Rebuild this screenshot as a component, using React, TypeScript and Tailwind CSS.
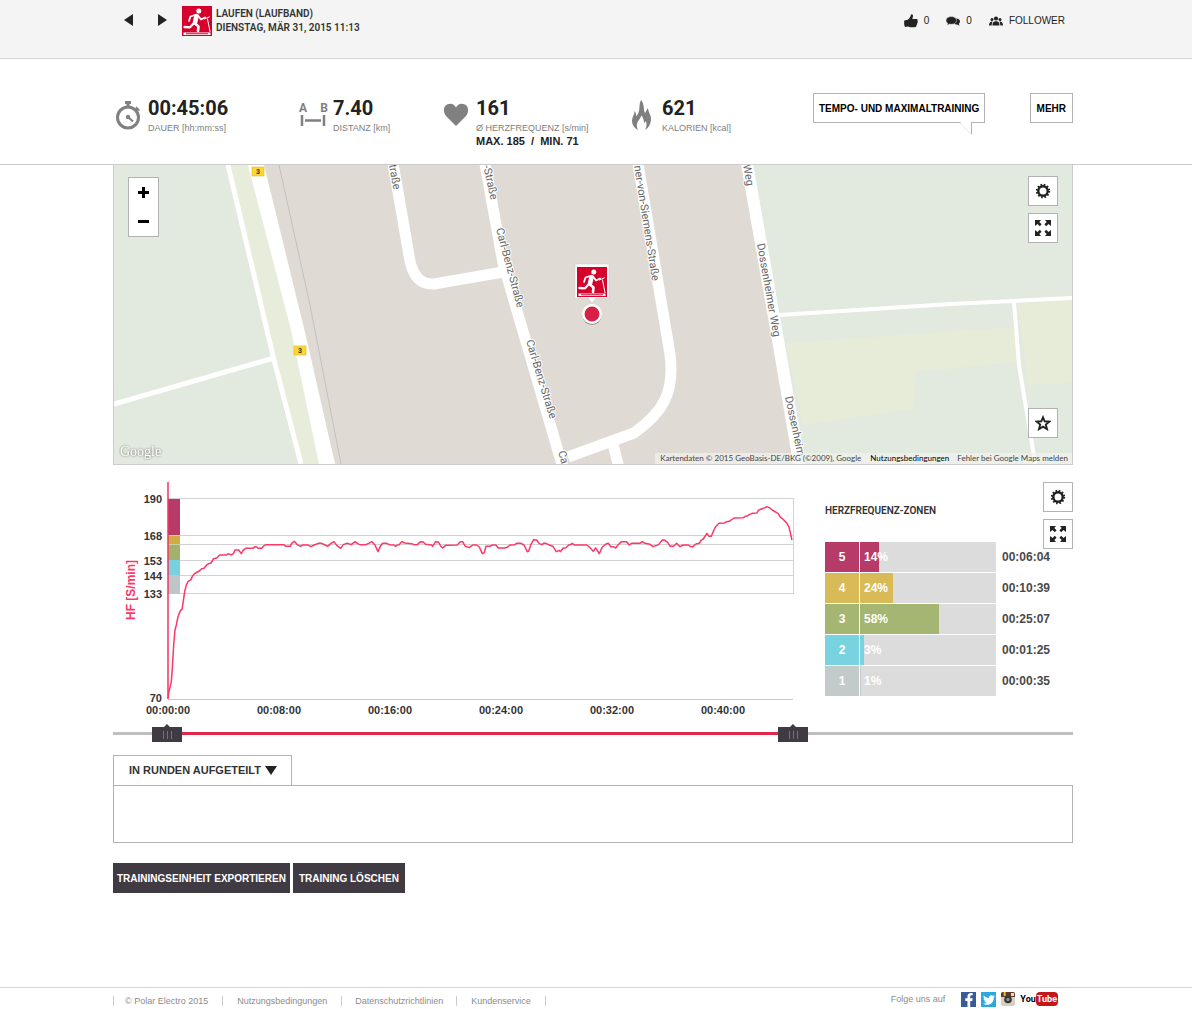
import React from 'react'
import { FaFacebookF, FaTwitter } from 'react-icons/fa'
import clsx from 'clsx'

const zones = [
  { zone: 5, percent: 14, time: '00:06:04', color: 'bg-[#b63b68]' },
  { zone: 4, percent: 24, time: '00:10:39', color: 'bg-[#d8ba57]' },
  { zone: 3, percent: 58, time: '00:25:07', color: 'bg-[#a5b572]' },
  { zone: 2, percent: 3, time: '00:01:25', color: 'bg-[#78d2e0]' },
  { zone: 1, percent: 1, time: '00:00:35', color: 'bg-[#c2caca]' },
]

// Heart rate curve, three units per chart pixel
const heartRate =
  '174,670 177,650 184,620 187,580 191,510 195,465 199,450 204,425 211,407 216,403 219,385 224,350 229,330 234,320 243,314 248,302 255,295 262,291 268,288 275,281 282,280 290,270 296,266 303,264 311,251 320,249 329,240 350,240 354,236 364,240 370,236 375,225 386,225 394,236 399,227 407,220 430,220 434,215 440,216 445,220 455,220 462,212 468,209 522,209 527,214 541,214 545,205 553,199 562,209 572,214 577,210 595,210 602,215 613,210 625,205 635,205 645,210 653,214 662,206 672,200 681,212 692,220 700,209 712,205 724,209 735,200 743,206 750,209 768,209 776,205 786,200 795,210 804,230 812,212 818,205 830,205 838,209 852,210 857,214 862,210 868,209 875,200 885,204 905,206 912,209 922,209 932,200 940,201 947,208 965,210 968,214 977,200 985,201 992,213 998,219 1007,211 1042,210 1051,200 1058,200 1066,214 1078,218 1088,210 1100,210 1108,216 1117,236 1123,233 1128,214 1140,214 1147,210 1158,210 1165,219 1185,219 1193,216 1202,210 1215,209 1220,205 1233,205 1242,210 1252,230 1256,229 1263,208 1271,194 1280,195 1288,206 1296,209 1301,205 1308,205 1320,211 1329,214 1339,230 1348,226 1351,230 1359,220 1368,218 1377,209 1382,209 1387,205 1393,210 1430,210 1440,218 1450,229 1457,219 1468,236 1477,216 1490,206 1495,205 1503,215 1510,215 1517,219 1526,208 1535,200 1550,200 1558,210 1565,205 1590,205 1597,200 1605,205 1620,208 1629,215 1646,209 1657,195 1665,196 1673,202 1681,214 1691,214 1700,205 1710,215 1720,210 1735,210 1742,215 1749,215 1758,207 1768,205 1773,196 1780,192 1791,175 1797,184 1804,184 1812,165 1817,155 1827,145 1844,144 1850,140 1858,139 1872,129 1900,128 1906,124 1912,123 1918,119 1927,115 1941,114 1945,106 1954,102 1966,98 1970,95 1978,98 1987,105 2004,115 2012,127 2021,134 2030,144 2037,156 2041,172 2046,195'

const TreadmillIcon = ({ className }: { className?: string }) => (
  <svg viewBox="0 0 30 30" className={className} aria-hidden="true">
    <rect width="30" height="30" fill="#d5002b" />
    <circle cx="16.800" cy="4.900" r="2.500" fill="#fff" />
    <g fill="none" stroke="#fff" strokeLinecap="round" strokeLinejoin="round">
      <path d="M14.500 10 13 16.500" strokeWidth="4.600" />
      <path d="M13 9 8.500 10.500 7 15" strokeWidth="1.800" />
      <path d="M16 9.500 19 13.500 23 11.500" strokeWidth="1.800" />
      <path d="M13 17.500 16.500 20.500 16 25" strokeWidth="2.600" />
      <path d="M12 17 8 21.300 2.500 21" strokeWidth="2.300" />
      <path d="M22.500 13 27.500 10.800M25.500 13 28 25.500" strokeWidth="1" />
    </g>
    <path d="M1.500 26.500h27v2.500h-27zM4 27.300v1h22v-1z" fill="#fff" fillRule="evenodd" />
  </svg>
)

const ThumbIcon = () => (
  <svg viewBox="0 0 14 14" className="size-3.5" aria-hidden="true">
    <path
      d="M.3 6.500 3.800 5.700C5.500 4.500 6.500 3 7 .8 7.300-.3 9 .2 9 1.800 9 3 8.600 4 8.200 5l4.300.1c1.300.2 1.500 1.500.9 2 .6.600.500 1.700-.3 2.100.400.800 0 1.600-.6 1.900.200 1-.3 1.700-1 1.900-2 .5-5 .5-7.500-.5l-3 .4C.2 11.500-.1 8.500.3 6.500z"
      fill="#222"
    />
  </svg>
)

const CommentsIcon = () => (
  <svg viewBox="0 0 14 14" className="size-3.5" aria-hidden="true">
    <path d="M10 4.500c2.300 0 4 1.300 4 3 0 1-.5 1.800-1.200 2.300l.7 1.900-2.500-1.200C8.500 10.700 7 9.700 7 8z" fill="#222" />
    <path
      d="M5.300 2.500c3 0 5.300 1.700 5.300 3.900s-2.300 3.900-5.300 3.900c-.6 0-1.200-.1-1.700-.2L1 11.600l.7-2.400C.6 8.500 0 7.500 0 6.400c0-2.200 2.300-3.900 5.300-3.900z"
      fill="#222"
      stroke="#f4f4f4"
      strokeWidth=".5"
    />
  </svg>
)

const FollowersIcon = () => (
  <svg viewBox="0 0 14 14" className="size-3.5" aria-hidden="true">
    <circle cx="7" cy="4.500" r="2.100" fill="#222" />
    <path d="M3.500 11.500c0-3 .8-3.300 2.700-4.200h1.600c1.900.9 2.700 1.200 2.700 4.200z" fill="#222" />
    <circle cx="3" cy="5.500" r="1.500" fill="#222" />
    <circle cx="11" cy="5.500" r="1.500" fill="#222" />
    <path d="M0 11.500c0-2.500 1-3.200 2.500-4l1.200.3C2.900 8.700 2.700 10 2.700 11.500zM14 11.500c0-2.500-1-3.200-2.500-4l-1.200.3c.8.900 1 2.200 1 3.700z" fill="#222" />
  </svg>
)

const StopwatchIcon = () => (
  <svg viewBox="0 0 26 30" className="h-[30px] w-[26px]" aria-hidden="true">
    <circle cx="13" cy="17.500" r="10.500" fill="none" stroke="#808080" strokeWidth="3" />
    <path d="M10 1h6v3h-1.500v3h-3V4H10z" fill="#808080" />
    <path d="m21 8 2.500 2.500M21 7l3.500 3.500" stroke="#808080" strokeWidth="1.600" />
    <circle cx="13" cy="17" r="2.200" fill="#808080" />
    <path d="m13 17 5 4.500" stroke="#808080" strokeWidth="2" />
  </svg>
)

const DistanceIcon = () => (
  <svg viewBox="0 0 30 26" className="h-[26px] w-[30px]" aria-hidden="true">
    <g fill="#808080" fontFamily="Roboto, sans-serif" fontWeight="700" fontSize="12" textAnchor="middle">
      <text x="5" y="10">A</text>
      <text x="26" y="10">B</text>
    </g>
    <path d="M4 13v11M26 13v11M7 18.500h16" stroke="#808080" strokeWidth="2.500" fill="none" />
  </svg>
)

const HeartIcon = () => (
  <svg viewBox="0 0 26 24" className="h-[24px] w-[26px]" aria-hidden="true">
    <path d="M13 23 3.500 13.500C-.5 9 .5 3.500 4 1.600 7.500-.2 11.500 1 13 4.500 14.500 1 18.500-.2 22 1.600c3.500 1.900 4.500 7.400.5 11.900z" fill="#808080" />
  </svg>
)

const FlameIcon = () => (
  <svg viewBox="0 0 20 30" className="h-[30px] w-5" aria-hidden="true">
    <path
      d="M9 0c4 5 2 9 4 13 1-1 1.500-3.500 3-5 0 4 3.500 7 3 12-.3 4-2.500 8-6 10 1.500-3 2-5 1-9-.7 1-1.300 1.500-2 2 0-3-1-5.500-2.500-7.500C8 19 5.500 21 5 24c-.4 2.500 0 4.500 1.200 6C2 28 0 24.500 0 20.500 0 17 2.500 15 2.500 11c1.300 1.500 1.800 3 1.500 5.500C9.500 11 6 5 9 0z"
      fill="#808080"
    />
  </svg>
)

const GearIcon = () => (
  <svg viewBox="0 0 16 16" className="size-4" aria-hidden="true">
    <circle cx="8" cy="8" r="4.700" fill="none" stroke="#222" strokeWidth="2.400" />
    <circle cx="8" cy="8" r="6" fill="none" stroke="#222" strokeWidth="2.400" strokeDasharray="1.571 1.571" />
  </svg>
)

const ExpandIcon = () => (
  <svg viewBox="0 0 16 16" className="size-4" aria-hidden="true">
    <path
      d="M0 0h6L4.300 2 6.600 4.300 4.800 6.200 2.500 4 0 6zM16 0v6l-2.500-2-2.300 2.200-1.800-1.900L11.700 2 10 0zM0 16v-6l2.500 2 2.300-2.200 1.800 1.900L4.300 14 6 16zM16 16h-6l1.700-2-2.300-2.300 1.800-1.900 2.300 2.200 2.500-2z"
      fill="#222"
    />
  </svg>
)

const StarIcon = () => (
  <svg viewBox="0 0 16 16" className="size-4" aria-hidden="true">
    <path d="m8 2.300 1.700 4 4.800.3-3.700 3 1.200 4.500L8 11.700l-4 2.400 1.200-4.500-3.700-3 4.800-.3z" fill="none" stroke="#222" strokeWidth="1.900" />
  </svg>
)

const InstagramIcon = () => (
  <svg viewBox="0 0 14 14" className="size-3.5" aria-hidden="true">
    <rect width="14" height="14" rx="2" fill="#d9cfc0" />
    <path d="M2 0h10a2 2 0 0 1 2 2v3H0V2a2 2 0 0 1 2-2z" fill="#5b3a29" />
    <path d="M2 0h1v4H2z" fill="#d33" />
    <path d="M3 0h1v4H3z" fill="#e8c33c" />
    <path d="M4 0h1v4H4z" fill="#5a9" />
    <rect x="10" y="1" width="3" height="3" fill="#ddd" />
    <circle cx="7" cy="7.500" r="3.800" fill="#3b3634" />
    <circle cx="7" cy="7.500" r="1.700" fill="#8d8f96" />
  </svg>
)

const IconButton = ({ label, children }: { label: string; children: React.ReactNode }) => (
  <button type="button" aria-label={label} className="flex size-[30px] items-center justify-center border border-[#b2b2b2] bg-white">
    {children}
  </button>
)

type StatProps = { icon: React.ReactNode; value: string; label: string; extra?: string }

const Stat = ({ icon, value, label, extra }: StatProps) => (
  <div className="flex">
    <div className="mr-[5px] flex h-[38px] w-[30px] shrink-0 items-center justify-center">{icon}</div>
    <div>
      <p className="font-['Roboto',sans-serif] text-xl leading-6 font-bold text-[#222]">{value}</p>
      <p className="pt-px text-[9px] leading-[14px] whitespace-nowrap text-[#808080]">{label}</p>
      {extra && <p className="text-[11px] leading-3 font-bold whitespace-pre text-[#222]">{extra}</p>}
    </div>
  </div>
)

const Header = () => (
  <header className="h-[59px] border-b border-[#d5d5d5] bg-[#f4f4f4]">
    <div className="mx-auto flex max-w-[966px] items-start justify-between pt-1.5 pr-[14px] pl-[10px]">
      <div className="flex">
        <button type="button" aria-label="Zurück" className="mt-2 mr-6 h-3 w-2.5">
          <svg viewBox="0 0 10 12" className="h-3 w-2.5">
            <path d="M10 0v12L1 6z" fill="#222" />
          </svg>
        </button>
        <button type="button" aria-label="Weiter" className="mt-2 mr-[15px] h-3 w-2.5">
          <svg viewBox="0 0 10 12" className="h-3 w-2.5">
            <path d="M1 0v12l9-6z" fill="#222" />
          </svg>
        </button>
        <TreadmillIcon className="size-[30px]" />
        <h1 className="ml-1 pt-px font-['Roboto',sans-serif] text-[10px] leading-[14px] font-semibold text-[#333]">
          LAUFEN (LAUFBAND)
          <br />
          DIENSTAG, MÄR 31, 2015 11:13
        </h1>
      </div>
      <div className="flex gap-[17px] pt-2 text-[10px] leading-3 text-[#222]">
        <button type="button" aria-label="Gefällt mir" className="flex items-center gap-1.5">
          <ThumbIcon />0
        </button>
        <button type="button" aria-label="Kommentare" className="flex items-center gap-1.5">
          <CommentsIcon />0
        </button>
        <button type="button" className="flex items-center gap-1.5">
          <FollowersIcon />
          FOLLOWER
        </button>
      </div>
    </div>
  </header>
)

const Summary = () => (
  <section className="h-[106px] border-b border-[#ccc]">
    <div className="mx-auto grid max-w-[966px] grid-cols-[185px_143px_186px_186px_1fr] pt-[37px] pr-[6px]">
      <Stat icon={<StopwatchIcon />} value="00:45:06" label="DAUER [hh:mm:ss]" />
      <Stat icon={<DistanceIcon />} value="7.40" label="DISTANZ [km]" />
      <Stat icon={<HeartIcon />} value="161" label="Ø HERZFREQUENZ [s/min]" extra="MAX. 185  /  MIN. 71" />
      <Stat icon={<FlameIcon />} value="621" label="KALORIEN [kcal]" />
      <div className="-mt-[3px] flex items-start justify-between text-[10px] font-bold whitespace-nowrap text-black">
        <button type="button" className="relative h-[30px] border border-[#b2b2b2] bg-white px-[5px]">
          TEMPO- UND MAXIMALTRAINING
          <svg viewBox="0 0 12 12" className="absolute top-7 right-3 size-3" aria-hidden="true">
            <path d="M0 0h11v12z" fill="#fff" />
            <path d="M11.500 0v12" stroke="#b2b2b2" />
            <path d="m0 1 11 11" stroke="#e8e8e8" />
          </svg>
        </button>
        <button type="button" className="h-[30px] border border-[#b2b2b2] bg-white px-1.5">
          MEHR
        </button>
      </div>
    </div>
  </section>
)

const RoadSign = ({ x, y }: { x: number; y: number }) => (
  <g transform={`translate(${x} ${y})`}>
    <rect width="12" height="9" fill="#fbd730" stroke="#d9b62c" strokeWidth=".6" />
    <text x="6" y="7" textAnchor="middle" fontSize="7" fontWeight="700" fill="#333" stroke="none">
      3
    </text>
  </g>
)

const streetNames = [
  { x: 275, y: 0, angle: 80, name: 'traße' },
  { x: 369, y: 1, angle: 77, name: '-Straße' },
  { x: 382, y: 64, angle: 75, name: 'Carl-Benz-Straße' },
  { x: 412, y: 176, angle: 73, name: 'Carl-Benz-Straße' },
  { x: 444, y: 287, angle: 73, name: 'Ca' },
  { x: 520, y: 1, angle: 81, name: 'ner-von-Siemens-Straße' },
  { x: 629, y: 0, angle: 80, name: 'Weg' },
  { x: 643, y: 79, angle: 80, name: 'Dossenheimer Weg' },
  { x: 671, y: 232, angle: 78, name: 'Dossenheim' },
]

const RouteMap = () => (
  <section aria-label="Karte" className="relative h-[300px] overflow-hidden border border-t-0 border-[#ccc]">
    <svg viewBox="0 0 958 299" preserveAspectRatio="xMidYMid slice" className="h-full w-full" fontFamily="Roboto, sans-serif">
      <rect width="958" height="299" fill="#e2e9de" />
      <path d="M116 0h20l43 165 28 134h-19l-26-104z" fill="#e7edda" />
      <path d="M672 178 902 162l2 35-102 10-3 37-110 16zM904 138l54-3v83l-44 2z" fill="#e7ecd9" />
      <path d="M150 0h484l31 175 22 124H221L192 170z" fill="#dfdad4" />
      <path d="M165 0 196 140l31 159" fill="none" stroke="#c3c0bd" />
      <path d="M134 0h16l42 172 29 127h-16l-28-134z" fill="#fff" />
      <g fill="none" stroke="#fff">
        <path d="m114 0 46 195 27 104M0 239l160-46" strokeWidth="5" />
        <path d="m279-2 17 98q5 24 24 23l75-13M371-1l18 99 60 205M524-1l32 190c5 40-8 59-36 79l-66 24M498 275l7 28" strokeWidth="11" />
        <path d="m633-1 31 176 22 128" strokeWidth="12" />
        <path d="m665 150 172-11 121-6M900 137l5 63 17 103" strokeWidth="4" />
      </g>
      <RoadSign x={138} y={2} />
      <RoadSign x={180} y={181} />
      <g fontSize="11" fill="#666" stroke="#fff" strokeWidth="2" paintOrder="stroke">
        {streetNames.map(({ x, y, angle, name }) => (
          <text key={`${name}-${y}`} transform={`translate(${x} ${y}) rotate(${angle})`}>
            {name}
          </text>
        ))}
      </g>
      <g>
        <path d="M461 99h34v34h-13l-4 5-4-5h-13z" fill="#fff" stroke="#ccc" strokeWidth=".6" />
        <svg x="463" y="102" width="30" height="30">
          <TreadmillIcon />
        </svg>
        <circle cx="478" cy="150.500" r="9.500" fill="#77706b" opacity=".7" />
        <circle cx="478" cy="149" r="8.700" fill="#d81f45" stroke="#fff" strokeWidth="2.500" />
      </g>
    </svg>
    <div className="absolute top-3 left-[14px] flex w-[31px] flex-col border border-[#b2b2b2] bg-white">
      <button type="button" aria-label="Vergrößern" className="flex h-[29px] items-center justify-center">
        <svg viewBox="0 0 11 11" className="size-[11px]">
          <path d="M4 0h3v4h4v3H7v4H4V7H0V4h4z" />
        </svg>
      </button>
      <button type="button" aria-label="Verkleinern" className="flex h-[29px] items-center justify-center">
        <svg viewBox="0 0 11 11" className="size-[11px]">
          <path d="M0 4h11v3H0z" />
        </svg>
      </button>
    </div>
    <div className="absolute top-[11px] right-[14px] flex flex-col gap-[7px]">
      <IconButton label="Karteneinstellungen">
        <GearIcon />
      </IconButton>
      <IconButton label="Karte maximieren">
        <ExpandIcon />
      </IconButton>
    </div>
    <div className="absolute right-[14px] bottom-[26px]">
      <IconButton label="Favorit">
        <StarIcon />
      </IconButton>
    </div>
    <span className="absolute bottom-0.5 left-[6px] font-['Liberation_Serif',serif] text-sm text-white drop-shadow-[0_0_1px_#666]">Google</span>
    <div className="absolute right-0 bottom-0 flex bg-[#f2f2f0]/70 font-['Lato',sans-serif] text-[8px] leading-[11px] whitespace-nowrap text-[#444]">
      <span className="px-[5px]">Kartendaten © 2015 GeoBasis-DE/BKG (©2009), Google</span>
      <a href="#nutzung" className="px-[4px] text-black">
        Nutzungsbedingungen
      </a>
      <a href="#fehler" className="px-[4px]">
        Fehler bei Google Maps melden
      </a>
    </div>
  </section>
)

const HeartRateChart = () => (
  <svg viewBox="0 0 712 236" className="block w-full" fontFamily="'Liberation Sans', Arial, sans-serif" role="img" aria-label="Herzfrequenz">
    <g stroke="#d2d2d2" shapeRendering="crispEdges">
      <path d="M55 16.500h625.500M55 53.500h625M55 62.500h625M55 78.500h625M55 93.500h625M55 111.500h625.500V16" fill="none" />
      <path d="M55 217.500h625" stroke="#c8c8d4" />
    </g>
    <g shapeRendering="crispEdges">
      <rect x="55" y="17" width="12" height="36" fill="#b63b68" />
      <rect x="55" y="53" width="12" height="9" fill="#d0ac45" />
      <rect x="55" y="62" width="12" height="16" fill="#a2b26c" />
      <rect x="55" y="78" width="12" height="15" fill="#76d2df" />
      <rect x="55" y="93" width="12" height="19" fill="#bfc6c7" />
      <path d="M55 53.500h12M55 62.500h12" stroke="#fff" opacity=".4" />
    </g>
    <path d="M55 0v217" stroke="#f9305f" strokeWidth="1.500" />
    <g transform="translate(-3 -7) scale(.3333)">
      <polyline points={heartRate} fill="none" stroke="#fb3868" strokeWidth="4.500" strokeLinejoin="round" />
    </g>
    <g fontSize="11" fontWeight="700" fill="#333">
      <g textAnchor="end">
        <text x="49" y="21">190</text>
        <text x="49" y="58">168</text>
        <text x="49" y="83">153</text>
        <text x="49" y="98">144</text>
        <text x="49" y="116">133</text>
        <text x="49" y="220">70</text>
      </g>
      <g textAnchor="middle">
        <text x="55" y="232">00:00:00</text>
        <text x="166" y="232">00:08:00</text>
        <text x="277" y="232">00:16:00</text>
        <text x="388" y="232">00:24:00</text>
        <text x="499" y="232">00:32:00</text>
        <text x="610" y="232">00:40:00</text>
      </g>
      <text transform="translate(22 108) rotate(-90)" textAnchor="middle" fontSize="12" fill="#fb3868">
        HF [S/min]
      </text>
    </g>
  </svg>
)

const Zones = () => (
  <aside className="relative">
    <h2 className="pt-[21px] font-['Roboto',sans-serif] text-[10px] leading-4 font-semibold text-[#333]">HERZFREQUENZ-ZONEN</h2>
    <table className="mt-[23px] text-xs font-bold">
      <tbody>
        {zones.map(({ zone, percent, time, color }) => (
          <tr key={zone}>
            <th className="p-0 pb-px text-white">
              <div className={clsx(color, 'mr-px flex h-[30px] w-[34px] items-center justify-center')}>{zone}</div>
            </th>
            <td className="w-[136px] p-0 pb-px text-white">
              <div className="relative flex h-[30px] items-center bg-[#dcdcdc]">
                <div className={clsx(color, 'h-full')} style={{ width: `${percent}%` }} />
                <span className="absolute left-1">{percent}%</span>
              </div>
            </td>
            <td className="p-0 pb-0.5 pl-1.5 text-[#4a4a4a]">{time}</td>
          </tr>
        ))}
      </tbody>
    </table>
    <div className="absolute top-0 right-0 flex flex-col gap-[7px]">
      <IconButton label="Diagrammeinstellungen">
        <GearIcon />
      </IconButton>
      <IconButton label="Diagramm maximieren">
        <ExpandIcon />
      </IconButton>
    </div>
  </aside>
)

const thumb =
  'pointer-events-none absolute inset-0 m-0 h-[18px] w-full appearance-none bg-transparent [&::-webkit-slider-thumb]:pointer-events-auto [&::-webkit-slider-thumb]:h-[18px] [&::-webkit-slider-thumb]:w-[30px] [&::-webkit-slider-thumb]:appearance-none [&::-webkit-slider-thumb]:rounded-none [&::-webkit-slider-thumb]:bg-[#403a43] [&::-webkit-slider-thumb]:bg-[linear-gradient(90deg,transparent_11px,#77727a_11px,#77727a_12px,transparent_12px,transparent_15px,#77727a_15px,#77727a_16px,transparent_16px,transparent_19px,#77727a_19px,#77727a_20px,transparent_20px)] [&::-webkit-slider-thumb]:bg-[length:30px_8px] [&::-webkit-slider-thumb]:bg-[position:0_7px] [&::-webkit-slider-thumb]:bg-no-repeat [&::-webkit-slider-thumb]:[clip-path:polygon(0_3px,12px_3px,15px_0,18px_3px,100%_3px,100%_100%,0_100%)]'

const RangeSlider = () => {
  const max = 930
  const [start, setStart] = React.useState(39)
  const [end, setEnd] = React.useState(665)

  return (
    <div className="relative mt-1.5 flex h-[18px] items-center">
      <div className="h-[3px] w-full bg-[#bfbfbf]">
        <div className="h-full bg-[#e0294a]" style={{ marginLeft: `${(start / max) * 100}%`, width: `${((end - start) / max) * 100}%` }} />
      </div>
      <input type="range" aria-label="Startzeit" min={0} max={max} value={start} onChange={(e) => setStart(Math.min(+e.target.value, end))} className={thumb} />
      <input type="range" aria-label="Endzeit" min={0} max={max} value={end} onChange={(e) => setEnd(Math.max(+e.target.value, start))} className={thumb} />
    </div>
  )
}

const Laps = () => (
  <section className="mt-[13px]">
    <button type="button" className="flex h-[30px] items-center gap-1 border border-b-0 border-[#b2b2b2] bg-white pr-[14px] pl-[15px] text-[11px] font-bold text-[#333]">
      IN RUNDEN AUFGETEILT
      <svg viewBox="0 0 12 9" className="h-[9px] w-3" aria-hidden="true">
        <path d="M0 0h12L6 9z" fill="#222" />
      </svg>
    </button>
    <div className="h-[58px] border border-[#b2b2b2]" />
    <div className="mt-5 flex gap-[3px] text-[10px] font-bold text-white">
      <button type="button" className="h-[30px] bg-[#403a43] px-1">
        TRAININGSEINHEIT EXPORTIEREN
      </button>
      <button type="button" className="h-[30px] bg-[#403a43] px-1.5">
        TRAINING LÖSCHEN
      </button>
    </div>
  </section>
)

const Footer = () => (
  <footer className="mt-auto border-t border-[#d5d5d5]">
    <div className="mx-auto flex h-[21px] max-w-[966px] justify-between pt-1 pr-[21px] text-[9px] text-[#8c8c8c]">
      <ul className="mt-1 flex h-[10px] divide-x divide-[#ccc] border-x border-[#ccc] leading-[10px]">
        <li className="pr-[14px] pl-[11px]">© Polar Electro 2015</li>
        <li>
          <a href="#nutzungsbedingungen" className="px-[14px]">
            Nutzungsbedingungen
          </a>
        </li>
        <li>
          <a href="#datenschutz" className="px-[13px]">
            Datenschutzrichtlinien
          </a>
        </li>
        <li>
          <a href="#kundenservice" className="px-[14px]">
            Kundenservice
          </a>
        </li>
      </ul>
      <div className="flex items-start leading-[14px]">
        <span className="mr-4">Folge uns auf</span>
        <a href="#facebook" aria-label="Facebook" className="mr-[5px] flex size-[15px] items-end justify-end bg-[#3b5998] text-white">
          <FaFacebookF className="size-3.5" />
        </a>
        <a href="#twitter" aria-label="Twitter" className="mr-[5px] flex size-[15px] items-center justify-center bg-[#2ca7e0] text-white">
          <FaTwitter className="size-3" />
        </a>
        <a href="#instagram" aria-label="Instagram" className="mr-[5px]">
          <InstagramIcon />
        </a>
        <a href="#youtube" className="flex font-['Roboto',sans-serif] font-bold text-black">
          You<span className="rounded-[4px] bg-[#c4171d] px-px text-white">Tube</span>
        </a>
      </div>
    </div>
  </footer>
)

export default function App() {
  return (
    <div className="flex min-h-screen flex-col bg-white font-['Liberation_Sans',Arial,sans-serif]">
      <Header />
      <Summary />
      <main className="mx-auto w-full max-w-[966px] pr-[6px]">
        <RouteMap />
        <section className="grid grid-cols-[minmax(0,1fr)_248px] pt-[17px]">
          <HeartRateChart />
          <Zones />
        </section>
        <RangeSlider />
        <Laps />
      </main>
      <Footer />
    </div>
  )
}
